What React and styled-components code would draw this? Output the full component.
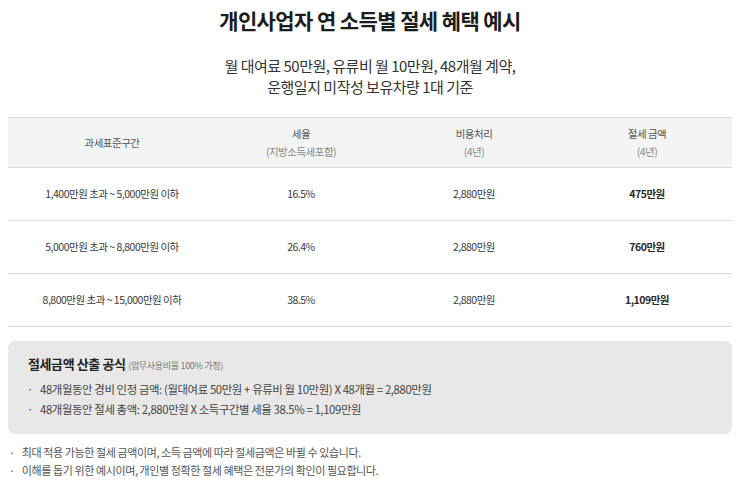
import React from "react";
import styled, { createGlobalStyle } from "styled-components";

const GlobalStyle = createGlobalStyle`
  body {
    margin: 0;
    background: #ffffff;
    font-family: "Noto Sans CJK KR", "Noto Sans", sans-serif;
    color: #333;
  }
`;

const Page = styled.div`
  padding: 0 8px;
`;

const Title = styled.h2`
  margin: 4px 0 0;
  text-align: center;
  font-size: 21px;
  font-weight: 700;
  line-height: 32px;
  letter-spacing: -0.6px;
  color: #1c1c1c;
`;

const Subtitle = styled.p`
  margin: 19px 0 0;
  text-align: center;
  font-size: 15px;
  line-height: 21px;
  letter-spacing: -0.5px;
  color: #333;
`;

const Table = styled.div`
  margin-top: 20px;
  border-top: 1px solid #dcdcdc;
`;

const Row = styled.div`
  display: grid;
  grid-template-columns: 208px 170px 176px 170px;
  height: ${props => (props.head ? "49px" : "52px")};
  background: ${props => (props.head ? "#f4f4f4" : "#fff")};
  border-bottom: 1px solid #dcdcdc;
`;

const Cell = styled.div`
  display: flex;
  flex-direction: column;
  align-items: center;
  justify-content: center;
  font-size: 10.5px;
  line-height: 18px;
  letter-spacing: -0.5px;
  color: ${props => (props.head ? "#555" : "#3a3a3a")};
  font-weight: ${props => (props.bold ? 700 : 400)};
`;

const Sub = styled.span`
  color: #888;
`;

const Strong = styled.span`
  color: #2a2a2a;
`;

const FormulaBox = styled.div`
  margin-top: 14px;
  background: #e8e8e8;
  border-radius: 7px;
  padding: 13px 18px 15px;
`;

const FormulaTitle = styled.div`
  font-size: 13px;
  font-weight: 700;
  line-height: 20px;
  letter-spacing: -0.4px;
  color: #222;
  margin: 0 0 3px 2px;
`;

const Note = styled.span`
  font-size: 9px;
  font-weight: 400;
  color: #777;
  letter-spacing: -0.3px;
`;

const BulletList = styled.ul`
  list-style: none;
  margin: ${props => (props.outside ? "9px 0 0" : "0")};
  padding: 0;
`;

const Bullet = styled.li`
  font-size: ${props => (props.tight ? "11px" : "11.4px")};
  line-height: ${props => (props.tight ? "18px" : "20px")};
  letter-spacing: -0.4px;
  color: ${props => (props.muted ? "#555" : "#444")};
  &::before {
    content: "·";
    margin: 0 7px 0 1px;
  }
`;

const rows = [
  { range: "1,400만원 초과 ~ 5,000만원 이하", rate: "16.5%", cost: "2,880만원", saving: "475만원" },
  { range: "5,000만원 초과 ~ 8,800만원 이하", rate: "26.4%", cost: "2,880만원", saving: "760만원" },
  { range: "8,800만원 초과 ~ 15,000만원 이하", rate: "38.5%", cost: "2,880만원", saving: "1,109만원" }
];

const App = () => {
  return (
    <Page>
      <GlobalStyle />
      <Title>개인사업자 연 소득별 절세 혜택 예시</Title>
      <Subtitle>
        월 대여료 50만원, 유류비 월 10만원, 48개월 계약,
        <br />
        운행일지 미작성 보유차량 1대 기준
      </Subtitle>

      <Table>
        <Row head>
          <Cell head>과세표준구간</Cell>
          <Cell head>
            세율
            <Sub>(지방소득세포함)</Sub>
          </Cell>
          <Cell head>
            비용처리
            <Sub>(4년)</Sub>
          </Cell>
          <Cell head>
            절세 금액
            <Sub>(4년)</Sub>
          </Cell>
        </Row>
        {rows.map(r => (
          <Row key={r.range}>
            <Cell>{r.range}</Cell>
            <Cell>{r.rate}</Cell>
            <Cell>{r.cost}</Cell>
            <Cell bold>
              <Strong>{r.saving}</Strong>
            </Cell>
          </Row>
        ))}
      </Table>

      <FormulaBox>
        <FormulaTitle>
          절세금액 산출 공식 <Note>(업무사용비율 100% 가정)</Note>
        </FormulaTitle>
        <BulletList>
          <Bullet>48개월동안 경비 인정 금액: (월대여료 50만원 + 유류비 월 10만원) X 48개월 = 2,880만원</Bullet>
          <Bullet>48개월동안 절세 총액: 2,880만원 X 소득구간별 세율 38.5% = 1,109만원</Bullet>
        </BulletList>
      </FormulaBox>

      <BulletList outside>
        <Bullet tight muted>최대 적용 가능한 절세 금액이며, 소득 금액에 따라 절세금액은 바뀔 수 있습니다.</Bullet>
        <Bullet tight muted>이해를 돕기 위한 예시이며, 개인별 정확한 절세 혜택은 전문가의 확인이 필요합니다.</Bullet>
      </BulletList>
    </Page>
  );
};

export default App;
